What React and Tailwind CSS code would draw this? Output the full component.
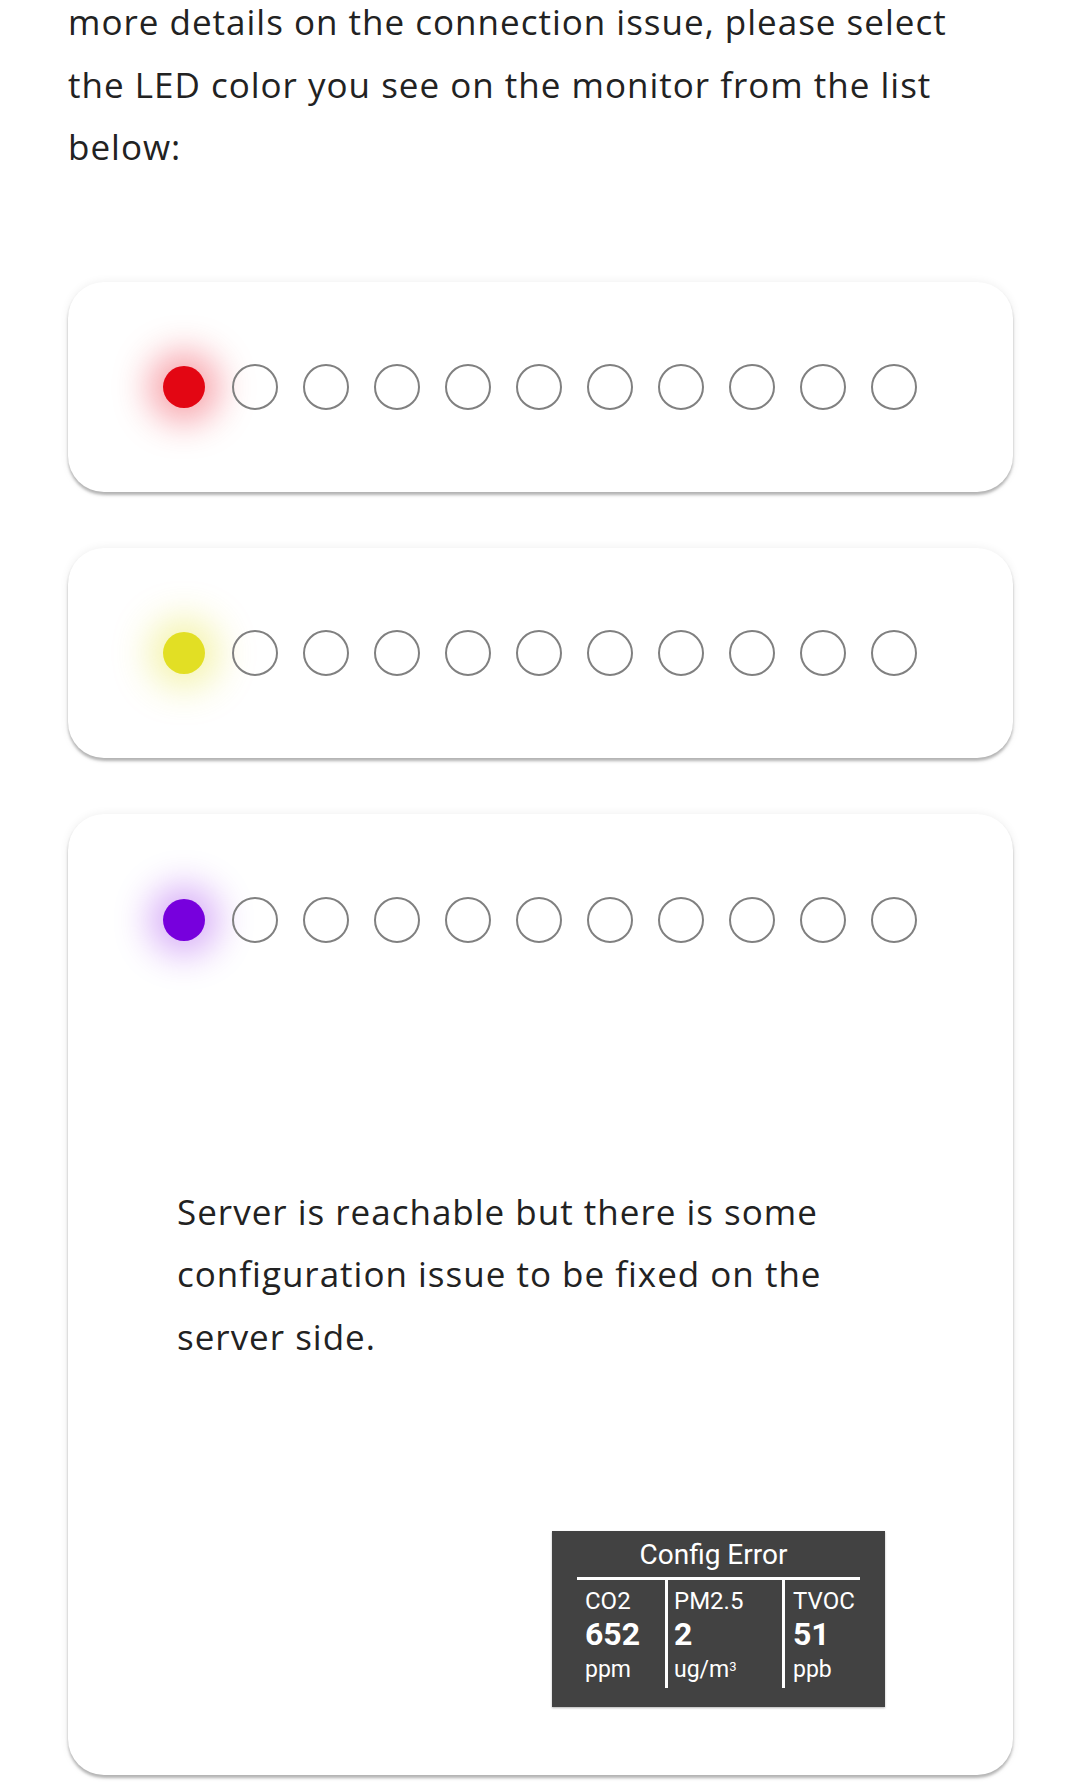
const LEDS = [
  { color: 'bg-[#e30613]', glow: 'shadow-[0_0_36px_14px_rgba(235,6,25,0.38)]' },
  { color: 'bg-[#e2df24]', glow: 'shadow-[0_0_36px_14px_rgba(226,223,36,0.38)]' },
  { color: 'bg-[#7700dd]', glow: 'shadow-[0_0_36px_14px_rgba(130,0,230,0.32)]' },
]

const Card = ({ children }) => (
  <div className="w-[945px] bg-white rounded-[36px] pl-[93px] py-[82px] shadow-[0_3px_3px_rgba(0,0,0,0.28),0_0_10px_rgba(0,0,0,0.07)]">
    {children}
  </div>
)

const LedRow = ({ led }) => (
  <div className="flex items-center gap-[25px] h-[46px]">
    <div className="w-[46px] h-[46px] flex items-center justify-center">
      <div className={`w-[42px] h-[42px] rounded-full ${led.color} ${led.glow}`} />
    </div>
    {Array.from({ length: 10 }).map((_, i) => (
      <div key={i} className="w-[46px] h-[46px] rounded-full border-2 border-[#808080]" />
    ))}
  </div>
)

const ConfigScreen = () => (
  <div className="w-[333px] h-[176px] bg-[#424242] px-[25px] text-white font-['Roboto',sans-serif] shadow-[0_1px_2px_rgba(0,0,0,0.3)]">
    <p className="text-[28px] leading-[34px] text-center pt-[7px] pb-[5px] pr-[10px]">Config Error</p>
    <div className="border-t-[3px] border-white grid grid-cols-[88px_117px_1fr] h-[113px]">
      <div className="pl-[8px] pt-[6px]">
        <p className="text-[24px] leading-[30px]">CO2</p>
        <p className="text-[32px] leading-[36px] font-bold">652</p>
        <p className="text-[23px] leading-[36px]">ppm</p>
      </div>
      <div className="border-l-[3px] border-white pl-[6px] pt-[6px] mb-[20px]">
        <p className="text-[24px] leading-[30px]">PM2.5</p>
        <p className="text-[32px] leading-[36px] font-bold">2</p>
        <p className="text-[23px] leading-[36px]">ug/m<sup className="text-[13px]">3</sup></p>
      </div>
      <div className="border-l-[3px] border-white pl-[8px] pt-[6px] mb-[20px]">
        <p className="text-[24px] leading-[30px]">TVOC</p>
        <p className="text-[32px] leading-[36px] font-bold">51</p>
        <p className="text-[23px] leading-[36px]">ppb</p>
      </div>
    </div>
  </div>
)

export default function App() {
  return (
    <div className="w-[1080px] h-[1785px] bg-white overflow-hidden font-['Open_Sans',sans-serif] text-[#222]">
      <div className="pl-[68px] -mt-[9px] text-[35px] leading-[62.5px] tracking-[1px]">
        <p>more details on the connection issue, please select</p>
        <p>the LED color you see on the monitor from the list</p>
        <p>below:</p>
      </div>

      <div className="pl-[68px] mt-[103px] flex flex-col gap-[56px]">
        <Card><LedRow led={LEDS[0]} /></Card>
        <Card><LedRow led={LEDS[1]} /></Card>
        <div className="w-[945px] h-[961px] bg-white rounded-[36px] pt-[83px] shadow-[0_3px_3px_rgba(0,0,0,0.28),0_0_10px_rgba(0,0,0,0.07)]">
          <div className="pl-[93px]">
            <LedRow led={LEDS[2]} />
          </div>
          <div className="pl-[109px] mt-[238px] text-[35px] leading-[62.5px] tracking-[1px]">
            <p>Server is reachable but there is some</p>
            <p>configuration issue to be fixed on the</p>
            <p>server side.</p>
          </div>
          <div className="flex justify-end pr-[128px] mt-[163px]">
            <ConfigScreen />
          </div>
        </div>
      </div>
    </div>
  )
}
